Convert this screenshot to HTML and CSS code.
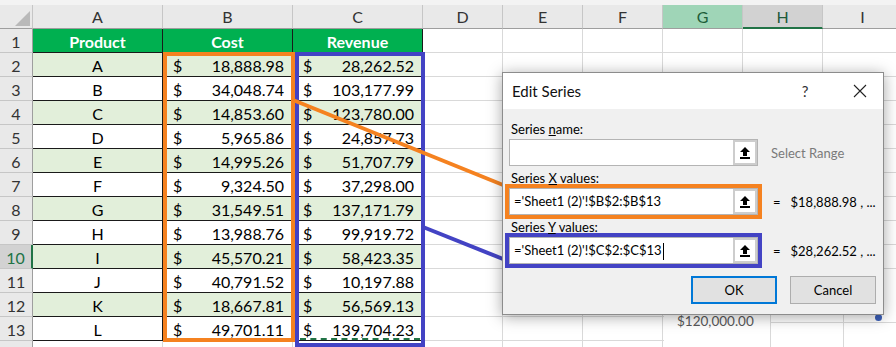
FILE: index.html
```html
<!DOCTYPE html>
<html>
	<head>
		<meta charset="utf-8">
		<title>Edit Series</title>
		<link rel="stylesheet" href="styles.css">
	</head>
	<body>
		<div id="book">
			<div class="topStrip"></div>
			<div id="sheet">
				<!--列标题-->
				<div class="corner"><span class="tri"></span></div>
				<div class="colHead">A</div>
				<div class="colHead">B</div>
				<div class="colHead">C</div>
				<div class="colHead">D</div>
				<div class="colHead">E</div>
				<div class="colHead">F</div>
				<div class="colHead sel">G</div>
				<div class="colHead selLine">H</div>
				<div class="colHead">I</div>

				<div class="rowHead">1</div>
				<div class="hd">Product</div><div class="hd">Cost</div><div class="hd">Revenue</div>
				<div></div><div></div><div></div><div></div><div></div><div></div>

				<div class="rowHead">2</div>
				<div class="tc alt ctr">A</div>
				<div class="tc alt money"><span>$</span><span>18,888.98</span></div>
				<div class="tc alt money"><span>$</span><span>28,262.52</span></div>
				<div></div><div></div><div></div><div></div><div></div><div></div>

				<div class="rowHead">3</div>
				<div class="tc ctr">B</div>
				<div class="tc money"><span>$</span><span>34,048.74</span></div>
				<div class="tc money"><span>$</span><span>103,177.99</span></div>
				<div></div><div></div><div></div><div></div><div></div><div></div>

				<div class="rowHead">4</div>
				<div class="tc alt ctr">C</div>
				<div class="tc alt money"><span>$</span><span>14,853.60</span></div>
				<div class="tc alt money"><span>$</span><span>123,780.00</span></div>
				<div></div><div></div><div></div><div></div><div></div><div></div>

				<div class="rowHead">5</div>
				<div class="tc ctr">D</div>
				<div class="tc money"><span>$</span><span>5,965.86</span></div>
				<div class="tc money"><span>$</span><span>24,857.73</span></div>
				<div></div><div></div><div></div><div></div><div></div><div></div>

				<div class="rowHead">6</div>
				<div class="tc alt ctr">E</div>
				<div class="tc alt money"><span>$</span><span>14,995.26</span></div>
				<div class="tc alt money"><span>$</span><span>51,707.79</span></div>
				<div></div><div></div><div></div><div></div><div></div><div></div>

				<div class="rowHead">7</div>
				<div class="tc ctr">F</div>
				<div class="tc money"><span>$</span><span>9,324.50</span></div>
				<div class="tc money"><span>$</span><span>37,298.00</span></div>
				<div></div><div></div><div></div><div></div><div></div><div></div>

				<div class="rowHead">8</div>
				<div class="tc alt ctr">G</div>
				<div class="tc alt money"><span>$</span><span>31,549.51</span></div>
				<div class="tc alt money"><span>$</span><span>137,171.79</span></div>
				<div></div><div></div><div></div><div></div><div></div><div></div>

				<div class="rowHead">9</div>
				<div class="tc ctr">H</div>
				<div class="tc money"><span>$</span><span>13,988.76</span></div>
				<div class="tc money"><span>$</span><span>99,919.72</span></div>
				<div></div><div></div><div></div><div></div><div></div><div></div>

				<div class="rowHead on">10</div>
				<div class="tc alt ctr">I</div>
				<div class="tc alt money"><span>$</span><span>45,570.21</span></div>
				<div class="tc alt money"><span>$</span><span>58,423.35</span></div>
				<div></div><div></div><div></div><div></div><div></div><div></div>

				<div class="rowHead">11</div>
				<div class="tc ctr">J</div>
				<div class="tc money"><span>$</span><span>40,791.52</span></div>
				<div class="tc money"><span>$</span><span>10,197.88</span></div>
				<div></div><div></div><div></div><div></div><div></div><div></div>

				<div class="rowHead">12</div>
				<div class="tc alt ctr">K</div>
				<div class="tc alt money"><span>$</span><span>18,667.81</span></div>
				<div class="tc alt money"><span>$</span><span>56,569.13</span></div>
				<div></div><div></div><div></div><div></div><div></div><div></div>

				<div class="rowHead">13</div>
				<div class="tc ctr">L</div>
				<div class="tc money"><span>$</span><span>49,701.11</span></div>
				<div class="tc money"><span>$</span><span>139,704.23</span></div>
				<div></div><div></div><div></div><div></div><div></div><div></div>

				<!--第14行只露出一点-->
				<div class="rowHead"></div>
				<div></div><div></div><div></div>
				<div></div><div></div><div></div><div></div><div></div><div></div>
			</div>

			<!--选中区域的框-->
			<div class="pick pickB"></div>
			<div class="pick pickC"><div class="ants"></div></div>

			<!--连接线-->
			<svg class="links" width="896" height="347">
				<line x1="293" y1="100" x2="508" y2="187" stroke="#f58220" stroke-width="4"/>
				<line x1="423" y1="227" x2="508" y2="261" stroke="#4343c4" stroke-width="4"/>
			</svg>

			<!--后面的图表-->
			<div class="chart">
				<div class="axisLbl">$120,000.00</div>
				<div class="vline v1"></div>
				<div class="vline v2"></div>
				<div class="hline"></div>
				<div class="dot"></div>
			</div>

			<!--对话框-->
			<div id="dlg">
				<div class="dlgTitle">
					<span>Edit Series</span>
					<span class="tBtn help">?</span>
					<span class="tBtn">
						<svg width="14" height="14" viewBox="0 0 14 14"><path d="M1 1 L13 13 M13 1 L1 13" stroke="#222" stroke-width="1.1"/></svg>
					</span>
				</div>
				<div class="dlgBody">
					<div class="lbl">Series <u>n</u>ame:</div>
					<div class="row">
						<div class="wrap">
							<div class="field"><span class="txt"></span><span class="pickBtn"><svg width="12" height="13" viewBox="0 0 12 13"><path d="M6 1 L11 6 H8 V10 H4 V6 H1 Z" fill="#000"/><rect x="1" y="11" width="10" height="2" fill="#000"/></svg></span></div>
						</div>
						<span class="val grey">Select Range</span>
					</div>
					<div class="lbl">Series <u>X</u> values:</div>
					<div class="row">
						<div class="wrap xs">
							<div class="field"><span class="txt">='Sheet1 (2)'!$B$2:$B$13</span><span class="pickBtn"><svg width="12" height="13" viewBox="0 0 12 13"><path d="M6 1 L11 6 H8 V10 H4 V6 H1 Z" fill="#000"/><rect x="1" y="11" width="10" height="2" fill="#000"/></svg></span></div>
						</div>
						<span class="val">=&nbsp;&nbsp; $18,888.98 , ...</span>
					</div>
					<div class="lbl">Series <u>Y</u> values:</div>
					<div class="row">
						<div class="wrap ys">
							<div class="field"><span class="txt">='Sheet1 (2)'!$C$2:$C$13<i class="caret"></i></span><span class="pickBtn"><svg width="12" height="13" viewBox="0 0 12 13"><path d="M6 1 L11 6 H8 V10 H4 V6 H1 Z" fill="#000"/><rect x="1" y="11" width="10" height="2" fill="#000"/></svg></span></div>
						</div>
						<span class="val">=&nbsp;&nbsp; $28,262.52 , ...</span>
					</div>
					<div class="btns">
						<a href="javascript:;" class="btn ok">OK</a>
						<a href="javascript:;" class="btn">Cancel</a>
					</div>
				</div>
			</div>
		</div>
	</body>
</html>
```

FILE: styles.css
```css
*{
	margin: 0px;
	padding: 0px;
	box-sizing: border-box;
}
body{
	background-color: #fff;
	font-family: Lato, "Liberation Sans", sans-serif;
	color: #000;
}
#book{
	width: 896px;
	height: 347px;
	position: relative;
	overflow: hidden;
}
.topStrip{
	height: 5px;
	background-color: #f3f3f3;
}

/* 表格 */
#sheet{
	display: grid;
	grid-template-columns: 33px 130px 130px 130px repeat(6, 80px);
	grid-auto-rows: 24px;
	font-size: 16px;
}
#sheet > div{
	border-right: 1px solid #d9d9d9;
	border-bottom: 1px solid #d9d9d9;
	line-height: 22px;
	padding-top: 2px;
	white-space: nowrap;
	overflow: hidden;
}
#sheet > .corner{
	background-color: #e9e9e9;
	border-right-color: #c6c6c6;
	border-bottom-color: #9e9e9e;
	position: relative;
}
.tri{
	position: absolute;
	right: 2px;
	bottom: 2px;
	width: 0;
	height: 0;
	border-left: 15px solid transparent;
	border-bottom: 15px solid #b9b9b9;
}
#sheet > .colHead{
	background-color: #e9e9e9;
	border-right-color: #c6c6c6;
	border-bottom-color: #9e9e9e;
	text-align: center;
	color: #333;
	padding-top: 1px;
	line-height: 22px;
}
#sheet > .sel{
	background-color: #9fd5b7;
	color: #1e5e3a;
}
#sheet > .selLine{
	background-color: #d2d2d2;
	border-bottom: 2px solid #217346;
	color: #215a3a;
}
#sheet > .rowHead{
	background-color: #e9e9e9;
	border-right-color: #9e9e9e;
	border-bottom-color: #c6c6c6;
	text-align: center;
	color: #333;
}
#sheet > .on{
	background-color: #d2d2d2;
	color: #217346;
	border-right: 2px solid #217346;
}
#sheet > .hd{
	background-color: #00b050;
	color: #fff;
	font-weight: bold;
	text-align: center;
	border-right-color: #1a1a1a;
	border-bottom-color: #1a1a1a;
}
#sheet > .tc{
	border-right-color: #1a1a1a;
	border-bottom-color: #1a1a1a;
}
#sheet > .alt{
	background-color: #e2efda;
}
.ctr{
	text-align: center;
}
#sheet > .money{
	display: flex;
	justify-content: space-between;
	padding: 2px 8px 0 10px;
}

/* 选区框 */
.pick{
	position: absolute;
	top: 52px;
	border: 4px solid;
}
.pickB{
	left: 163px;
	width: 132px;
	height: 290px;
	border-color: #f58220;
}
.pickC{
	left: 295px;
	width: 130px;
	height: 295px;
	border-color: #4343c4;
}
.ants{
	position: absolute;
	left: 1px;
	right: 1px;
	top: 282px;
	border-top: 2px dashed #217346;
}
.links{
	position: absolute;
	left: 0;
	top: 0;
}

/* 图表 */
.chart{
	position: absolute;
	left: 664px;
	top: 290px;
	width: 232px;
	height: 57px;
	background-color: #fff;
}
.axisLbl{
	position: absolute;
	left: 13px;
	top: 23px;
	font-size: 13.5px;
	color: #595959;
}
.vline{
	position: absolute;
	top: 0;
	bottom: 0;
	width: 1px;
	background-color: #d9d9d9;
}
.v1{ left: 106px; }
.v2{ left: 179px; }
.hline{
	position: absolute;
	left: 106px;
	right: 0;
	top: 32px;
	height: 1px;
	background-color: #d9d9d9;
}
.dot{
	position: absolute;
	left: 211px;
	top: 24px;
	width: 7px;
	height: 7px;
	border-radius: 50%;
	background-color: #3b5fb8;
}

/* 对话框 */
#dlg{
	position: absolute;
	left: 502px;
	top: 72px;
	width: 382px;
	height: 243px;
	background-color: #f0f0f0;
	border: 1px solid #8c8c8c;
	box-shadow: 0 2px 14px rgba(0,0,0,0.35);
	font-size: 13px;
}
.dlgTitle{
	height: 36px;
	background-color: #fff;
	display: flex;
	align-items: center;
	padding-left: 9px;
	font-size: 15px;
	color: #111;
}
.tBtn{
	width: 46px;
	height: 36px;
	display: flex;
	align-items: center;
	justify-content: center;
}
.help{
	margin-left: auto;
	margin-right: 9px;
	color: #333;
}
.dlgBody{
	padding: 13px 0 0 2px;
}
.lbl{
	height: 14px;
	line-height: 14px;
	padding-left: 6px;
	margin-bottom: -1px;
	position: relative;
}
.row{
	display: flex;
	align-items: center;
	margin-bottom: 1px;
}
.wrap{
	width: 257px;
	height: 35px;
	border: 4px solid transparent;
}
.xs{
	border-color: #f58220;
}
.ys{
	border-color: #4343c4;
}
.field{
	display: flex;
	height: 27px;
	border: 1px solid #b4b4b4;
	background-color: #fff;
}
.txt{
	flex: 1;
	padding-left: 4px;
	line-height: 25px;
	white-space: nowrap;
}
.caret{
	display: inline-block;
	width: 1px;
	height: 17px;
	background-color: #000;
	vertical-align: middle;
	margin-left: 1px;
}
.pickBtn{
	width: 24px;
	border: 2px solid #cdcdcd;
	background-color: #fff;
	display: flex;
	align-items: center;
	justify-content: center;
}
.val{
	margin-left: 11px;
	white-space: nowrap;
}
.grey{
	color: #7a7a7a;
	margin-left: 9px;
}
.btns{
	display: flex;
	justify-content: flex-end;
	gap: 13px;
	padding-right: 7px;
	margin-top: 8px;
}
.btn{
	display: block;
	width: 86px;
	height: 28px;
	line-height: 26px;
	text-align: center;
	background-color: #e1e1e1;
	border: 1px solid #adadad;
	color: #000;
	text-decoration: none;
}
.ok{
	border: 2px solid #0078d7;
	line-height: 24px;
}
```
